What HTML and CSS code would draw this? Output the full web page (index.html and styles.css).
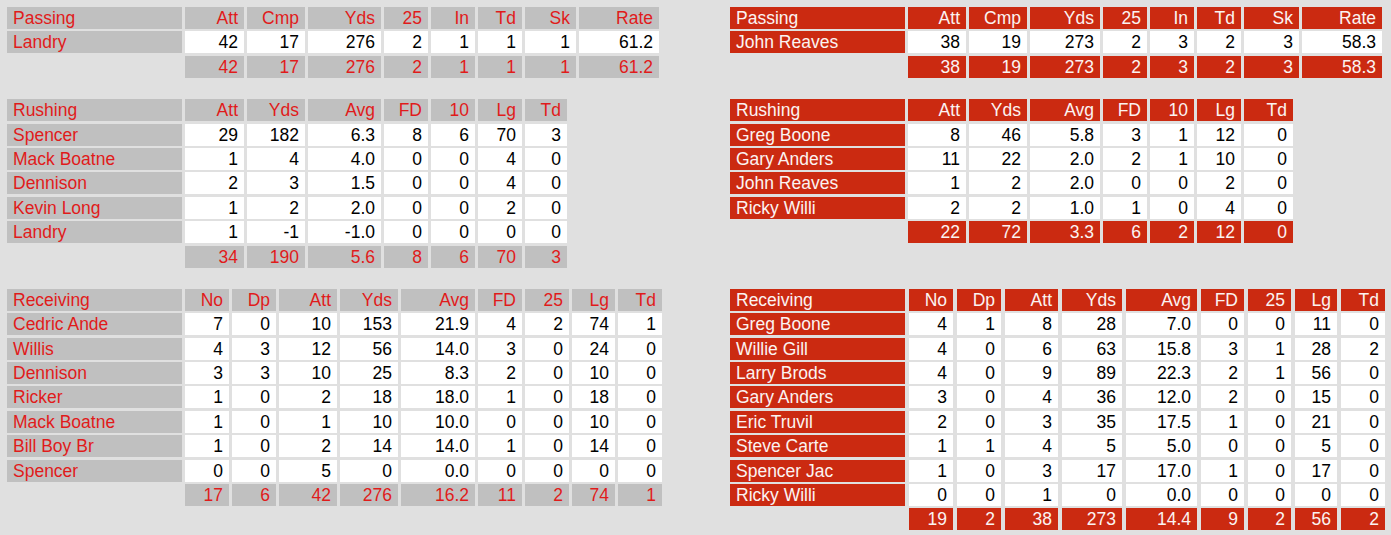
FILE: index.html
```html
<!DOCTYPE html>
<html>
<head>
<meta charset="utf-8">
<title>Box Score</title>
<link rel="stylesheet" href="styles.css">
</head>
<body>
<div class="page">
    <div class="stat home pass-l">
      <div class="lab n">Passing</div><div class="lab">Att</div><div class="lab">Cmp</div><div class="lab">Yds</div><div class="lab">25</div><div class="lab">In</div><div class="lab">Td</div><div class="lab">Sk</div><div class="lab">Rate</div>
      <div class="lab n">Landry</div><div class="d">42</div><div class="d">17</div><div class="d">276</div><div class="d">2</div><div class="d">1</div><div class="d">1</div><div class="d">1</div><div class="d">61.2</div>
      <div class="e"></div><div class="lab">42</div><div class="lab">17</div><div class="lab">276</div><div class="lab">2</div><div class="lab">1</div><div class="lab">1</div><div class="lab">1</div><div class="lab">61.2</div>
    </div>
    <div class="stat away pass-r">
      <div class="lab n">Passing</div><div class="lab">Att</div><div class="lab">Cmp</div><div class="lab">Yds</div><div class="lab">25</div><div class="lab">In</div><div class="lab">Td</div><div class="lab">Sk</div><div class="lab">Rate</div>
      <div class="lab n">John Reaves</div><div class="d">38</div><div class="d">19</div><div class="d">273</div><div class="d">2</div><div class="d">3</div><div class="d">2</div><div class="d">3</div><div class="d">58.3</div>
      <div class="e"></div><div class="lab">38</div><div class="lab">19</div><div class="lab">273</div><div class="lab">2</div><div class="lab">3</div><div class="lab">2</div><div class="lab">3</div><div class="lab">58.3</div>
    </div>

    <div class="stat home rush-l">
      <div class="lab n">Rushing</div><div class="lab">Att</div><div class="lab">Yds</div><div class="lab">Avg</div><div class="lab">FD</div><div class="lab">10</div><div class="lab">Lg</div><div class="lab">Td</div>
      <div class="lab n">Spencer</div><div class="d">29</div><div class="d">182</div><div class="d">6.3</div><div class="d">8</div><div class="d">6</div><div class="d">70</div><div class="d">3</div>
      <div class="lab n">Mack Boatne</div><div class="d">1</div><div class="d">4</div><div class="d">4.0</div><div class="d">0</div><div class="d">0</div><div class="d">4</div><div class="d">0</div>
      <div class="lab n">Dennison</div><div class="d">2</div><div class="d">3</div><div class="d">1.5</div><div class="d">0</div><div class="d">0</div><div class="d">4</div><div class="d">0</div>
      <div class="lab n">Kevin Long</div><div class="d">1</div><div class="d">2</div><div class="d">2.0</div><div class="d">0</div><div class="d">0</div><div class="d">2</div><div class="d">0</div>
      <div class="lab n">Landry</div><div class="d">1</div><div class="d">-1</div><div class="d">-1.0</div><div class="d">0</div><div class="d">0</div><div class="d">0</div><div class="d">0</div>
      <div class="e"></div><div class="lab">34</div><div class="lab">190</div><div class="lab">5.6</div><div class="lab">8</div><div class="lab">6</div><div class="lab">70</div><div class="lab">3</div>
    </div>
    <div class="stat away rush-r">
      <div class="lab n">Rushing</div><div class="lab">Att</div><div class="lab">Yds</div><div class="lab">Avg</div><div class="lab">FD</div><div class="lab">10</div><div class="lab">Lg</div><div class="lab">Td</div>
      <div class="lab n">Greg Boone</div><div class="d">8</div><div class="d">46</div><div class="d">5.8</div><div class="d">3</div><div class="d">1</div><div class="d">12</div><div class="d">0</div>
      <div class="lab n">Gary Anders</div><div class="d">11</div><div class="d">22</div><div class="d">2.0</div><div class="d">2</div><div class="d">1</div><div class="d">10</div><div class="d">0</div>
      <div class="lab n">John Reaves</div><div class="d">1</div><div class="d">2</div><div class="d">2.0</div><div class="d">0</div><div class="d">0</div><div class="d">2</div><div class="d">0</div>
      <div class="lab n">Ricky Willi</div><div class="d">2</div><div class="d">2</div><div class="d">1.0</div><div class="d">1</div><div class="d">0</div><div class="d">4</div><div class="d">0</div>
      <div class="e"></div><div class="lab">22</div><div class="lab">72</div><div class="lab">3.3</div><div class="lab">6</div><div class="lab">2</div><div class="lab">12</div><div class="lab">0</div>
    </div>

    <div class="stat home rec-l">
      <div class="lab n">Receiving</div><div class="lab">No</div><div class="lab">Dp</div><div class="lab">Att</div><div class="lab">Yds</div><div class="lab">Avg</div><div class="lab">FD</div><div class="lab">25</div><div class="lab">Lg</div><div class="lab">Td</div>
      <div class="lab n">Cedric Ande</div><div class="d">7</div><div class="d">0</div><div class="d">10</div><div class="d">153</div><div class="d">21.9</div><div class="d">4</div><div class="d">2</div><div class="d">74</div><div class="d">1</div>
      <div class="lab n">Willis</div><div class="d">4</div><div class="d">3</div><div class="d">12</div><div class="d">56</div><div class="d">14.0</div><div class="d">3</div><div class="d">0</div><div class="d">24</div><div class="d">0</div>
      <div class="lab n">Dennison</div><div class="d">3</div><div class="d">3</div><div class="d">10</div><div class="d">25</div><div class="d">8.3</div><div class="d">2</div><div class="d">0</div><div class="d">10</div><div class="d">0</div>
      <div class="lab n">Ricker</div><div class="d">1</div><div class="d">0</div><div class="d">2</div><div class="d">18</div><div class="d">18.0</div><div class="d">1</div><div class="d">0</div><div class="d">18</div><div class="d">0</div>
      <div class="lab n">Mack Boatne</div><div class="d">1</div><div class="d">0</div><div class="d">1</div><div class="d">10</div><div class="d">10.0</div><div class="d">0</div><div class="d">0</div><div class="d">10</div><div class="d">0</div>
      <div class="lab n">Bill Boy Br</div><div class="d">1</div><div class="d">0</div><div class="d">2</div><div class="d">14</div><div class="d">14.0</div><div class="d">1</div><div class="d">0</div><div class="d">14</div><div class="d">0</div>
      <div class="lab n">Spencer</div><div class="d">0</div><div class="d">0</div><div class="d">5</div><div class="d">0</div><div class="d">0.0</div><div class="d">0</div><div class="d">0</div><div class="d">0</div><div class="d">0</div>
      <div class="e"></div><div class="lab">17</div><div class="lab">6</div><div class="lab">42</div><div class="lab">276</div><div class="lab">16.2</div><div class="lab">11</div><div class="lab">2</div><div class="lab">74</div><div class="lab">1</div>
    </div>
    <div class="stat away rec-r">
      <div class="lab n">Receiving</div><div class="lab">No</div><div class="lab">Dp</div><div class="lab">Att</div><div class="lab">Yds</div><div class="lab">Avg</div><div class="lab">FD</div><div class="lab">25</div><div class="lab">Lg</div><div class="lab">Td</div>
      <div class="lab n">Greg Boone</div><div class="d">4</div><div class="d">1</div><div class="d">8</div><div class="d">28</div><div class="d">7.0</div><div class="d">0</div><div class="d">0</div><div class="d">11</div><div class="d">0</div>
      <div class="lab n">Willie Gill</div><div class="d">4</div><div class="d">0</div><div class="d">6</div><div class="d">63</div><div class="d">15.8</div><div class="d">3</div><div class="d">1</div><div class="d">28</div><div class="d">2</div>
      <div class="lab n">Larry Brods</div><div class="d">4</div><div class="d">0</div><div class="d">9</div><div class="d">89</div><div class="d">22.3</div><div class="d">2</div><div class="d">1</div><div class="d">56</div><div class="d">0</div>
      <div class="lab n">Gary Anders</div><div class="d">3</div><div class="d">0</div><div class="d">4</div><div class="d">36</div><div class="d">12.0</div><div class="d">2</div><div class="d">0</div><div class="d">15</div><div class="d">0</div>
      <div class="lab n">Eric Truvil</div><div class="d">2</div><div class="d">0</div><div class="d">3</div><div class="d">35</div><div class="d">17.5</div><div class="d">1</div><div class="d">0</div><div class="d">21</div><div class="d">0</div>
      <div class="lab n">Steve Carte</div><div class="d">1</div><div class="d">1</div><div class="d">4</div><div class="d">5</div><div class="d">5.0</div><div class="d">0</div><div class="d">0</div><div class="d">5</div><div class="d">0</div>
      <div class="lab n">Spencer Jac</div><div class="d">1</div><div class="d">0</div><div class="d">3</div><div class="d">17</div><div class="d">17.0</div><div class="d">1</div><div class="d">0</div><div class="d">17</div><div class="d">0</div>
      <div class="lab n">Ricky Willi</div><div class="d">0</div><div class="d">0</div><div class="d">1</div><div class="d">0</div><div class="d">0.0</div><div class="d">0</div><div class="d">0</div><div class="d">0</div><div class="d">0</div>
      <div class="e"></div><div class="lab">19</div><div class="lab">2</div><div class="lab">38</div><div class="lab">273</div><div class="lab">14.4</div><div class="lab">9</div><div class="lab">2</div><div class="lab">56</div><div class="lab">2</div>
    </div>
</div>
</body>
</html>
```

FILE: styles.css
```css
html, body {
  margin: 0;
  padding: 0;
  background: #e0e0e0;
}

body {
  font-family: "Liberation Sans", Arial, sans-serif;
  font-size: 17.5px;
}

.page {
  display: grid;
  grid-template-columns: 655px 655px;
  column-gap: 68px;
  row-gap: 21.4px;
  align-items: start;
  justify-items: start;
  padding: 7px 0 0 7px;
}

.stat {
  display: grid;
  grid-auto-rows: 22px;
  row-gap: 2.4px;
  column-gap: 3px;
}

.stat > div {
  line-height: 22px;
  height: 22px;
  text-align: right;
  padding: 0 6px;
  white-space: nowrap;
  overflow: hidden;
  box-sizing: border-box;
}

.stat > .n {
  text-align: left;
}

.d {
  background: #ffffff;
  color: #000000;
}

.home .lab {
  background: #c0c0c0;
  color: #e01b1b;
}

.away .lab {
  background: #cb2a11;
  color: #fbf3f1;
}

.pass-l {
  grid-template-columns: 175px 59px 58px 73px 44px 44px 44px 51px 80px;
}

.rush-l {
  grid-template-columns: 175px 59px 58px 73px 44px 44px 44px 42px;
}

.rec-l {
  grid-template-columns: 175px 44px 44px 58px 58px 74px 44px 44px 43px 44px;
}

.pass-r {
  grid-template-columns: 175px 58px 58px 70px 44px 44px 44px 55px 80px;
}

.rush-r {
  grid-template-columns: 175px 58px 58px 70px 44px 44px 44px 49px;
}

.rec-r {
  column-gap: 4px;
  grid-template-columns: 175px 44px 44px 53px 60px 71px 43px 43px 42px 44px;
}
```
